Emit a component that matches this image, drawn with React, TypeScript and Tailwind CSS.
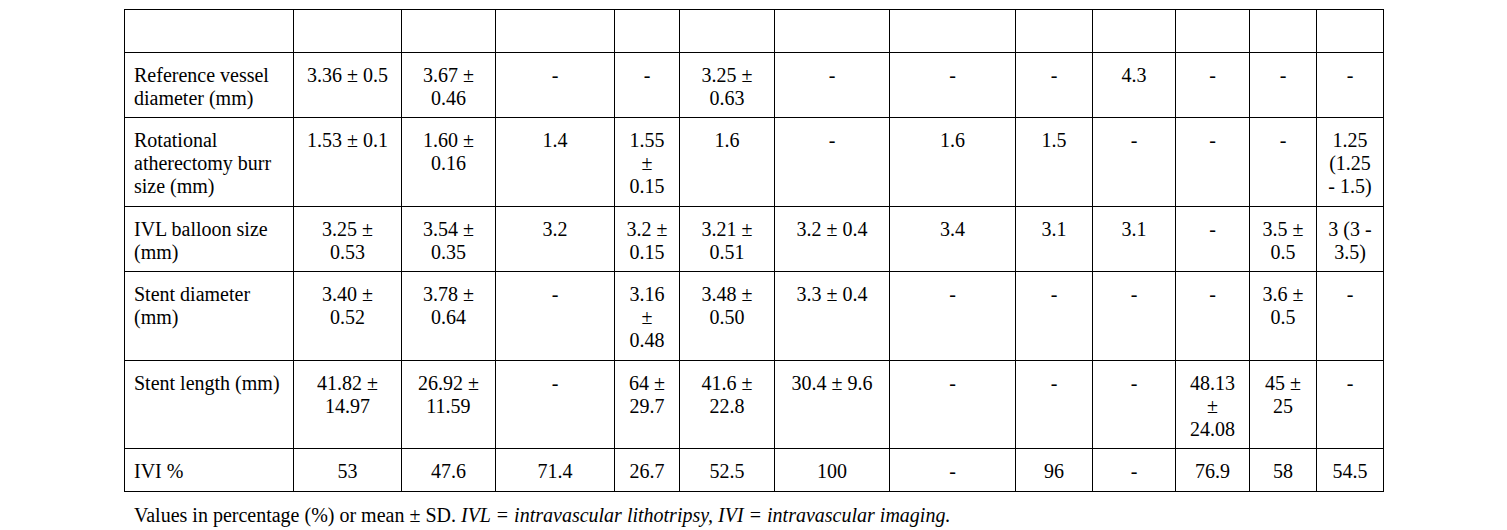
import React from "react"

// Column widths measured from the reference, first column is the label
const colWidths = [169, 108, 94, 119, 65, 95, 115, 126, 77, 83, 74, 67, 67]

const rows: [string, string[]][] = [
    ["", ["", "", "", "", "", "", "", "", "", "", "", ""]],
    ["Reference vessel diameter (mm)", ["3.36 ± 0.5", "3.67 ± 0.46", "-", "-", "3.25 ± 0.63", "-", "-", "-", "4.3", "-", "-", "-"]],
    ["Rotational atherectomy burr size (mm)", ["1.53 ± 0.1", "1.60 ± 0.16", "1.4", "1.55 ± 0.15", "1.6", "-", "1.6", "1.5", "-", "-", "-", "1.25 (1.25 - 1.5)"]],
    ["IVL balloon size (mm)", ["3.25 ± 0.53", "3.54 ± 0.35", "3.2", "3.2 ± 0.15", "3.21 ± 0.51", "3.2 ± 0.4", "3.4", "3.1", "3.1", "-", "3.5 ± 0.5", "3 (3 - 3.5)"]],
    ["Stent diameter (mm)", ["3.40 ± 0.52", "3.78 ± 0.64", "-", "3.16 ± 0.48", "3.48 ± 0.50", "3.3 ± 0.4", "-", "-", "-", "-", "3.6 ± 0.5", "-"]],
    ["Stent length (mm)", ["41.82 ± 14.97", "26.92 ± 11.59", "-", "64 ± 29.7", "41.6 ± 22.8", "30.4 ± 9.6", "-", "-", "-", "48.13 ± 24.08", "45 ± 25", "-"]],
    ["IVI %", ["53", "47.6", "71.4", "26.7", "52.5", "100", "-", "96", "-", "76.9", "58", "54.5"]],
]

const cell = "border border-black align-top pt-[11px] pb-[7.5px] px-[9px]"

const App = () => {
    return (
        <div className="w-[1507px] h-[530px] bg-white text-black font-['Liberation_Serif','Times_New_Roman',serif] text-[20px] leading-[23px] pl-[124px] pt-[9px]">
            <table className="table-fixed border-collapse w-[1260px]">
                <colgroup>
                    {colWidths.map((w, i) => (
                        <col key={i} style={{ width: w }} />
                    ))}
                </colgroup>
                <tbody>
                    {rows.map(([label, values], r) => (
                        <tr key={r}>
                            <td className={`${cell} text-left`}>{label || "\u00a0"}</td>
                            {values.map((v, c) => (
                                <td key={c} className={`${cell} text-center`}>
                                    {v || "\u00a0"}
                                </td>
                            ))}
                        </tr>
                    ))}
                </tbody>
            </table>

            {/* Footnote */}
            <p className="mt-[12px] ml-[10px]">
                Values in percentage (%) or mean ± SD.{" "}
                <i>IVL = intravascular lithotripsy, IVI = intravascular imaging.</i>
            </p>
        </div>
    )
}

export default App
